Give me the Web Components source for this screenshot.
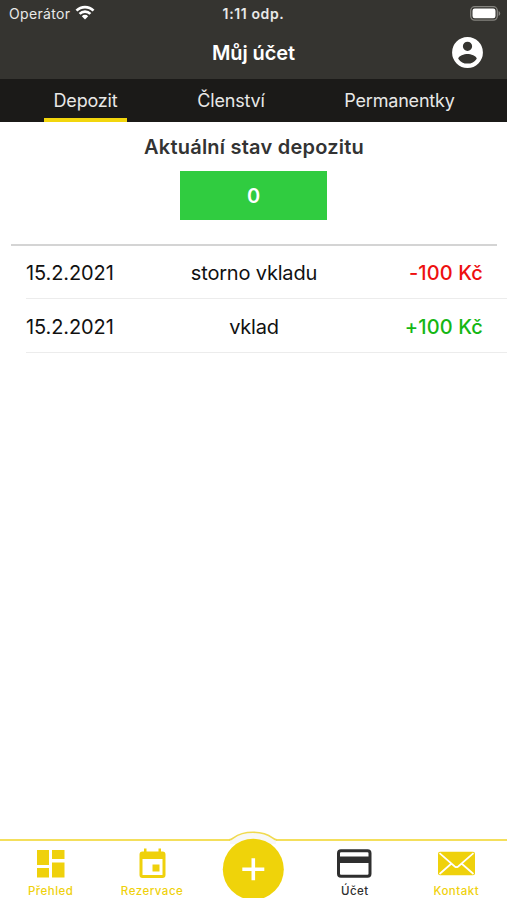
<!DOCTYPE html>
<html lang="cs">
<head>
<meta charset="utf-8">
<title>Můj účet</title>
<style>
  body {
    margin: 0;
    font-family: Inter, "Liberation Sans", sans-serif;
    background: #fff;
  }
</style>
</head>
<body>
<account-app>
  <status-bar slot="top" carrier="Operátor" time="1:11 odp."></status-bar>
  <title-bar slot="top">Můj účet</title-bar>
  <tab-bar slot="top">
    <tab-item style="--w: 83px" active>Depozit</tab-item>
    <tab-item style="--w: 87px">Členství</tab-item>
    <tab-item style="--w: 129px">Permanentky</tab-item>
  </tab-bar>
  <deposit-state amount="0">Aktuální stav depozitu</deposit-state>
  <deposit-row date="15.2.2021" amount="-100 Kč">storno vkladu</deposit-row>
  <deposit-row date="15.2.2021" amount="+100 Kč">vklad</deposit-row>
  <bottom-nav slot="bottom">
    <nav-item icon="overview">Přehled</nav-item>
    <nav-item icon="calendar">Rezervace</nav-item>
    <add-button></add-button>
    <nav-item icon="card" active>Účet</nav-item>
    <nav-item icon="mail">Kontakt</nav-item>
  </bottom-nav>
</account-app>

<script>
class BaseElement extends HTMLElement {
  constructor() {
    super();
    this.attachShadow({ mode: "open" });
  }

  connectedCallback() {
    const template = document.createElement("template");
    template.innerHTML = `<style>${this.getStyles()}</style>${this.getTemplate()}`;
    this.shadowRoot.replaceChildren(template.content.cloneNode(true));
  }
}

class AccountApp extends BaseElement {
  getTemplate() {
    return `
      <header><slot name="top"></slot></header>
      <main><slot></slot></main>
      <slot name="bottom"></slot>
    `;
  }

  getStyles() {
    return `
      :host{
        display: flex;
        flex-direction: column;
        height: 900px;
        overflow: hidden;
      }
      main{
        flex: 1;
      }
    `;
  }
}

class StatusBar extends BaseElement {
  getTemplate() {
    return `
      <div class="carrier">
        <span>${this.getAttribute("carrier")}</span>
        <svg width="20" height="15" viewBox="0 0 20 15">
          <g fill="none" stroke="#fff" stroke-width="2.7">
            <path d="M1.5 5.6a12 12 0 0 1 17 0"/>
            <path d="M4.6 8.9a7.6 7.6 0 0 1 10.8 0"/>
          </g>
          <path d="M10 14.4l-3.200-3.200a4.500 4.500 0 0 1 6.400 0z" fill="#fff"/>
        </svg>
      </div>
      <b>${this.getAttribute("time")}</b>
      <svg class="battery" width="31" height="15" viewBox="0 0 31 15">
        <rect x=".7" y=".7" width="26.600" height="13.400" rx="4" fill="none" stroke="#85847f" stroke-width="1.300"/>
        <rect x="2.500" y="2.500" width="23" height="9.800" rx="2.200" fill="#fff"/>
        <path d="M28.600 5v5q1.600-.8 1.600-2.500t-1.600-2.500z" fill="#85847f"/>
      </svg>
    `;
  }

  getStyles() {
    return `
      :host{
        display: grid;
        grid-template-columns: 1fr auto 1fr;
        align-items: center;
        height: 27px;
        padding: 0 6px 0 9px;
        background: #353430;
        color: #e9e9e8;
        font-size: 14px;
      }
      .carrier{
        display: flex;
        align-items: center;
        gap: 5px;
        letter-spacing: .35px;
      }
      .carrier svg{
        margin-top: -2px;
      }
      b{
        margin-left: -3px;
        font-weight: 600;
        letter-spacing: .62px;
      }
      .battery{
        justify-self: end;
      }
    `;
  }
}

class TitleBar extends BaseElement {
  getTemplate() {
    return `
      <h1><slot></slot></h1>
      <svg width="37" height="37" viewBox="0 0 24 24" fill="#fff">
        <path d="M12 2a10 10 0 1 0 0 20 10 10 0 0 0 0-20zm0 3a3 3 0 1 1 0 6 3 3 0 0 1 0-6zm0 14.2a7.2 7.2 0 0 1-6-3.22c.03-1.99 4-3.08 6-3.08s5.97 1.09 6 3.08a7.2 7.2 0 0 1-6 3.22z"/>
      </svg>
    `;
  }

  getStyles() {
    return `
      :host{
        display: grid;
        grid-template-columns: 1fr auto 1fr;
        align-items: center;
        height: 52px;
        padding: 0 21px;
        background: #353430;
        color: #fff;
      }
      h1{
        grid-column: 2;
        margin: 0;
        font-size: 20px;
        font-weight: 600;
        letter-spacing: -.1px;
      }
      svg{
        justify-self: end;
        margin-bottom: 2px;
      }
    `;
  }
}

class TabBar extends BaseElement {
  getTemplate() {
    return `<slot></slot>`;
  }

  getStyles() {
    return `
      :host{
        display: flex;
        justify-content: space-between;
        height: 43px;
        padding: 0 43px 0 44px;
        background: #1b1a18;
      }
    `;
  }
}

class TabItem extends BaseElement {
  getTemplate() {
    return `<slot></slot>`;
  }

  getStyles() {
    return `
      :host{
        display: flex;
        align-items: center;
        justify-content: center;
        box-sizing: border-box;
        width: var(--w);
        border-bottom: 4px solid transparent;
        padding-top: 4px;
        color: #e8e8e7;
        font-size: 18px;
        letter-spacing: -.2px;
      }
      :host([active]){
        border-color: #f2d60d;
      }
    `;
  }
}

class DepositState extends BaseElement {
  getTemplate() {
    return `
      <h2><slot></slot></h2>
      <div>${this.getAttribute("amount")}</div>
    `;
  }

  getStyles() {
    return `
      :host{
        display: flex;
        flex-direction: column;
        align-items: center;
        height: 122px;
        margin: 0 10px -1px 11px;
        border-bottom: 2px solid #d4d4d4;
      }
      h2{
        margin: 12px 0 11px;
        font-size: 20px;
        line-height: 26px;
        font-weight: 600;
        letter-spacing: .22px;
        color: #333;
      }
      div{
        width: 147px;
        height: 49px;
        margin-right: 1px;
        background: #30cc40;
        color: #fff;
        font-size: 20px;
        font-weight: 600;
        line-height: 51px;
        text-align: center;
      }
    `;
  }
}

class DepositRow extends BaseElement {
  getTemplate() {
    const amount = this.getAttribute("amount");
    return `
      <span>${this.getAttribute("date")}</span>
      <span class="note"><slot></slot></span>
      <span class="amount ${amount.startsWith("-") ? "minus" : "plus"}">${amount}</span>
    `;
  }

  getStyles() {
    return `
      :host{
        display: grid;
        grid-template-columns: 1fr auto 1fr;
        align-items: center;
        box-sizing: border-box;
        height: 54px;
        margin-left: 26px;
        padding: 2px 24px 0 0;
        border-bottom: 1px solid #ececec;
        color: #111;
        font-size: 20px;
        letter-spacing: -.1px;
      }
      .note{
        margin-left: -1px;
        letter-spacing: -.18px;
      }
      .amount{
        justify-self: end;
        font-weight: 500;
        letter-spacing: .12px;
      }
      .minus{
        color: #ee1010;
      }
      .plus{
        color: #14b714;
      }
    `;
  }
}

class BottomNav extends BaseElement {
  getTemplate() {
    return `<slot></slot>`;
  }

  getStyles() {
    return `
      :host{
        display: grid;
        grid-template-columns: repeat(5, 1fr);
        height: 59px;
        border-top: 2px solid #f4df5c;
        background: #fff;
      }
    `;
  }
}

const icons = {
  overview: `
    <path d="M5 4h12v15H5zM20 4h12.500v9H20zM5 22h12v9.500H5zM20 16.500h12.500v15H20z" fill="currentColor"/>`,
  calendar: `
    <path d="M10 2.500h2.500v3h12v-3H27v3h1.500q3 0 3 3v20.500q0 3-3 3h-20q-3 0-3-3V8.500q0-3 3-3H10zM8.500 13v16h20V13z" fill="currentColor" fill-rule="evenodd"/>
    <path d="M18.500 18.500h7v7h-7z" fill="currentColor"/>`,
  card: `
    <rect x="2.500" y="4.800" width="31.500" height="25.500" rx="2.500" fill="none" stroke="currentColor" stroke-width="3"/>
    <path d="M2.500 10.500h31v6.500h-31z" fill="currentColor"/>`,
  mail: `
    <rect x="0" y="5.700" width="37" height="23.500" rx="2" fill="currentColor"/>
    <path d="M1.500 7.200l15.300 13.300q1.700 1.300 3.400 0L35.500 7.200M1.500 28l12-10.500M35.500 28L23.500 17.500" fill="none" stroke="#fff" stroke-width="1.700"/>`
};

class NavItem extends BaseElement {
  getTemplate() {
    return `
      <svg width="37" height="37" viewBox="0 0 37 37">${icons[this.getAttribute("icon")]}</svg>
      <span><slot></slot></span>
    `;
  }

  getStyles() {
    return `
      :host{
        display: flex;
        flex-direction: column;
        align-items: center;
        padding-top: 5px;
        color: #efd10c;
        font-size: 11.5px;
        font-weight: 500;
        letter-spacing: .5px;
      }
      :host([active]){
        color: #2e2e2e;
      }
      span{
        line-height: 16px;
      }
      svg{
        display: block;
      }
    `;
  }
}

class AddButton extends BaseElement {
  getTemplate() {
    return `
      <svg width="80" height="67" viewBox="0 0 80 67">
        <path d="M17 9C22 6.500 28 1.500 40 1.500S58 6.500 63 9v4H17z" fill="#f8f8f6"/>
        <path d="M16 8.900q2 0 4.500-2Q28 1.300 40 1.300T59.500 6.900q2.500 2 4.500 2" fill="none" stroke="#f0da50" stroke-width="1.600"/>
        <circle cx="40.300" cy="38.300" r="30.500" fill="#efd30a"/>
        <path d="M40.300 27.300v22M29.300 38.300h22" stroke="#fff" stroke-width="3.600"/>
      </svg>
    `;
  }

  getStyles() {
    return `
      :host{
        display: flex;
        justify-content: center;
      }
      /* the button rises over the bar's top line */
      svg{
        flex: none;
        margin-top: -10px;
      }
    `;
  }
}

customElements.define("account-app", AccountApp);
customElements.define("status-bar", StatusBar);
customElements.define("title-bar", TitleBar);
customElements.define("tab-bar", TabBar);
customElements.define("tab-item", TabItem);
customElements.define("deposit-state", DepositState);
customElements.define("deposit-row", DepositRow);
customElements.define("bottom-nav", BottomNav);
customElements.define("nav-item", NavItem);
customElements.define("add-button", AddButton);
</script>
</body>
</html>
